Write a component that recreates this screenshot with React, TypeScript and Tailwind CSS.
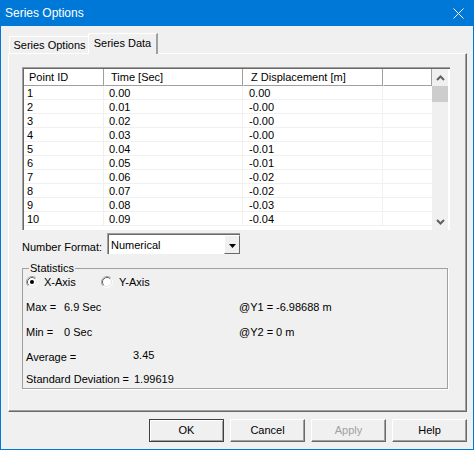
import React from 'react';

const rows = [
  ['1', '0.00', '0.00'],
  ['2', '0.01', '-0.00'],
  ['3', '0.02', '-0.00'],
  ['4', '0.03', '-0.00'],
  ['5', '0.04', '-0.01'],
  ['6', '0.05', '-0.01'],
  ['7', '0.06', '-0.02'],
  ['8', '0.07', '-0.02'],
  ['9', '0.08', '-0.03'],
  ['10', '0.09', '-0.04'],
];

// classic sunken radio
const Radio: React.FC<{ checked?: boolean }> = ({ checked }) => (
  <svg width="12" height="12" viewBox="0 0 12 12" className="shrink-0">
    <circle cx="6" cy="6" r="5" fill="#fff" />
    <path d="M2.11 9.89A5.5 5.5 0 0 1 9.89 2.11" fill="none" stroke="#a0a0a0" />
    <path d="M9.89 2.11A5.5 5.5 0 0 1 2.11 9.89" fill="none" stroke="#fff" />
    <path d="M2.82 9.18A4.5 4.5 0 0 1 9.18 2.82" fill="none" stroke="#696969" />
    <path d="M9.18 2.82A4.5 4.5 0 0 1 2.82 9.18" fill="none" stroke="#e3e3e3" />
    {checked && <circle cx="6" cy="6" r="2" fill="#000" />}
  </svg>
);

const Chevron: React.FC<{ down?: boolean }> = ({ down }) => (
  <svg width="9" height="6" viewBox="0 0 9 6">
    <path d={down ? 'M1 1L4.5 4.5L8 1' : 'M1 5L4.5 1.5L8 5'} fill="none" stroke="#606060" strokeWidth="2" />
  </svg>
);

const DataList: React.FC = () => (
  <div className="w-[428px] h-[163px] border-t border-l border-[#a0a0a0] border-r-white border-b-white flex">
    <div className="flex-1 flex border-t border-l border-[#696969] border-r-[#e3e3e3] border-b-[#e3e3e3] bg-white overflow-hidden">
      <div className="w-[408px] flex flex-col">
        <div className="h-[17px] shrink-0 flex leading-[16px]">
          <div className="w-[80px] pl-[5px] border-r border-b border-[#a0a0a0] border-l-white">Point ID</div>
          <div className="w-[139px] pl-[6px] border-r border-b border-l border-[#a0a0a0] border-l-white">Time [Sec]</div>
          <div className="w-[140px] pl-[7px] border-r border-b border-l border-[#a0a0a0] border-l-white">Z Displacement [m]</div>
          <div className="w-[49px] border-r border-b border-l border-[#a0a0a0] border-l-white" />
        </div>
        {rows.map((r) => (
          <div key={r[0]} className="h-[14px] shrink-0 flex leading-[14px]">
            <div className="w-[80px] pl-[3px] border-r border-b border-[#f0f0f0]">{r[0]}</div>
            <div className="w-[139px] pl-[5px] border-r border-b border-[#f0f0f0]">{r[1]}</div>
            <div className="w-[140px] pl-[6px] border-r border-b border-[#f0f0f0]">{r[2]}</div>
            <div className="w-[49px] border-b border-[#f0f0f0]" />
          </div>
        ))}
      </div>
      <div className="w-[16px] bg-[#f0f0f0] flex flex-col">
        <div className="h-[17px] flex items-center justify-center">
          <Chevron />
        </div>
        <div className="h-[16px] bg-[#cdcdcd]" />
        <div className="flex-1" />
        <div className="h-[17px] flex items-center justify-center">
          <Chevron down />
        </div>
      </div>
    </div>
  </div>
);

const Button: React.FC<{ label: string; isDefault?: boolean; disabled?: boolean }> = ({ label, isDefault, disabled }) => (
  <button
    type="button"
    className={
      isDefault
        ? 'w-[75px] h-[23px] bg-[#f0f0f0] border border-[#404040] shadow-[inset_1px_1px_0_#fff,inset_-1px_-1px_0_#a0a0a0] text-black'
        : disabled
          ? 'w-[75px] h-[23px] bg-[#f0f0f0] border border-white border-r-[#696969] border-b-[#696969] shadow-[inset_-1px_-1px_0_#a0a0a0] text-[#a0a0a0]'
          : 'w-[75px] h-[23px] bg-[#f0f0f0] border border-white border-r-[#696969] border-b-[#696969] shadow-[inset_-1px_-1px_0_#a0a0a0] text-black'
    }
  >
    {label}
  </button>
);

const App: React.FC = () => {
  return (
    <div className="w-[474px] h-[450px] bg-[#0078d7] px-px pb-px flex flex-col font-['Liberation_Sans',Arial,sans-serif] text-[11px] text-black select-none">
      {/* title bar */}
      <div className="h-[26px] shrink-0 flex items-center justify-between pl-[4px] pr-[9px] text-white text-[12px]">
        <span>Series Options</span>
        <svg width="11" height="11" viewBox="0 0 11 11">
          <path d="M0.5 0.5L10.5 10.5M10.5 0.5L0.5 10.5" stroke="#fff" strokeWidth="1" />
        </svg>
      </div>

      <div className="flex-1 bg-[#f0f0f0] pt-[7px] pl-[7px] flex flex-col">
        {/* tabs */}
        <div className="h-[20px] pl-px flex items-end">
          <div className="w-[81px] h-[17px] border-t border-l border-white border-r border-r-[#a0a0a0] flex items-center justify-center">
            Series Options
          </div>
          <div className="relative z-10 -ml-[2px] -mb-px w-[70px] h-[21px] bg-[#f0f0f0] border-t border-l border-white border-r-2 border-r-[#a0a0a0] flex items-center justify-center pb-[2px]">
            Series Data
          </div>
        </div>

        {/* panel */}
        <div className="w-[459px] h-[359px] border-t border-l border-white border-r border-b border-r-[#696969] border-b-[#696969] shadow-[inset_-1px_-1px_0_#a0a0a0] pt-[13px] pl-[13px]">
          <DataList />

          <div className="mt-[3px] h-[21px] flex items-start">
            <div className="w-[85px] pt-[8px] leading-[13px]">Number Format:</div>
            <div className="w-[133px] h-[21px] border-t border-l border-[#a0a0a0] border-r-white border-b-white">
              <div className="h-full flex border-t border-l border-[#696969] border-r-[#e3e3e3] border-b-[#e3e3e3] bg-white">
                <div className="flex-1 pl-[2px] pt-[4px] leading-[13px]">Numerical</div>
                <div className="w-[16px] h-full bg-[#f0f0f0] border-t border-l border-white border-r border-b border-r-[#696969] border-b-[#696969] flex items-center justify-center pt-[2px]">
                  <svg width="7" height="4" viewBox="0 0 7 4">
                    <path d="M0 0H7L3.5 4Z" fill="#000" />
                  </svg>
                </div>
              </div>
            </div>
          </div>

          <fieldset className="mt-[8px] w-[426px] border border-[#a0a0a0] shadow-[1px_1px_0_#fff] pl-[3px] pb-[2px]">
            <legend className="ml-[3px] px-px leading-[13px]">Statistics</legend>
            <div className="h-[14px] flex items-center">
              <div className="w-[75px] flex items-center">
                <Radio checked />
                <span className="ml-[6px]">X-Axis</span>
              </div>
              <div className="flex items-center">
                <Radio />
                <span className="ml-[6px]">Y-Axis</span>
              </div>
            </div>
            <div className="mt-[11px] h-[14px] leading-[14px] flex">
              <div className="w-[213px] flex">
                <span className="w-[38px]">Max =</span>
                <span>6.9 Sec</span>
              </div>
              <span className="w-[37px]">@Y1 =</span>
              <span>-6.98688 m</span>
            </div>
            <div className="mt-[11px] h-[14px] leading-[14px] flex">
              <div className="w-[213px] flex">
                <span className="w-[38px]">Min =</span>
                <span>0 Sec</span>
              </div>
              <span className="w-[37px]">@Y2 =</span>
              <span>0 m</span>
            </div>
            <div className="mt-[11px] h-[14px] leading-[14px] flex">
              <span className="w-[107px]">Average =</span>
              <span className="-mt-[2px]">3.45</span>
            </div>
            <div className="mt-[8px] h-[14px] leading-[14px] flex">
              <span className="w-[108px]">Standard Deviation =</span>
              <span>1.99619</span>
            </div>
          </fieldset>
        </div>

        {/* dialog buttons */}
        <div className="mt-[7px] pr-[6px] flex justify-end gap-[6px]">
          <Button label="OK" isDefault />
          <Button label="Cancel" />
          <Button label="Apply" disabled />
          <Button label="Help" />
        </div>
      </div>
    </div>
  );
};

export default App;
